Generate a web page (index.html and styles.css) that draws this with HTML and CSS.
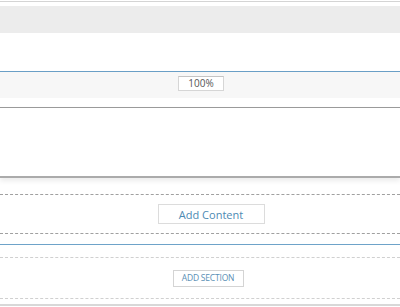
FILE: index.html
```html
<!DOCTYPE html>
<html>
<head>
    <title>Page Editor</title>
    <link rel="stylesheet" href="styles.css">
</head>
<body>

<div class="top-rule"></div>
<div class="header-band"></div>
<div class="header-space"></div>

<div class="editor">
    <div class="editor-toolbar">
        <span class="zoom-box">100%</span>
    </div>
    <div class="editor-gap"></div>
    <div class="editor-canvas"></div>
</div>

<div class="content-zone">
    <div class="drop-area">
        <button class="add-content">Add Content</button>
    </div>
</div>

<div class="section-zone">
    <div class="section-area">
        <button class="add-section">ADD SECTION</button>
    </div>
</div>

<div class="bottom-rule"></div>

</body>
</html>
```

FILE: styles.css
```css
body {
    font-family: "Open Sans", "Liberation Sans", sans-serif;
    background-color: #fff;
    margin: 0;
    padding: 0;
    color: #555;
    height: 307px;
    overflow: hidden;
}

.top-rule {
    margin-top: 1px;
    height: 1px;
    background-color: #d4d4d4;
}

.header-band {
    margin-top: 4px;
    height: 27px;
    background-color: #ececec;
}

.header-space {
    height: 38px;
}

.editor {
    border-top: 1px solid #6a9fc6;
}

.editor-toolbar {
    height: 26px;
    background-color: #f7f7f7;
    display: flex;
    justify-content: center;
    align-items: flex-start;
    padding-left: 2px;
}

.zoom-box {
    margin-top: 4px;
    width: 44px;
    height: 13px;
    border: 1px solid #d6d6d6;
    border-top-color: #c4c4c4;
    background-color: #fff;
    font-size: 10px;
    line-height: 13px;
    text-align: center;
    color: #555;
}

.editor-gap {
    height: 9px;
}

.editor-canvas {
    height: 68px;
    border-top: 1px solid #9a9a9a;
    border-bottom: 2px solid #ababab;
    box-shadow: 0 3px 5px rgba(0, 0, 0, 0.08);
}

.content-zone {
    padding-top: 16px;
    border-bottom: 1px solid #6ea3c9;
}

.drop-area {
    border-top: 1px dashed #a0a0a0;
    border-bottom: 1px dashed #a0a0a0;
    height: 38px;
    display: flex;
    justify-content: center;
    align-items: center;
    padding-left: 22px;
    margin-bottom: 10px;
}

button {
    font-family: "Open Sans", "Liberation Sans", sans-serif;
    background-color: #fff;
    color: #4d8ab3;
    cursor: pointer;
    padding: 0;
}

.add-content {
    width: 107px;
    height: 20px;
    border: 1px solid #dcdcdc;
    font-size: 11px;
    line-height: 17px;
}

.section-zone {
    padding-top: 12px;
}

.section-area {
    border-top: 1px dashed #d0d0d0;
    border-bottom: 1px dashed #d0d0d0;
    height: 40px;
    display: flex;
    justify-content: center;
    align-items: center;
    padding-left: 16px;
}

.add-section {
    width: 71px;
    height: 17px;
    border: 1px solid #d4d4d4;
    font-size: 8.5px;
    line-height: 14px;
    color: #5a8fb5;
    letter-spacing: -0.2px;
}

.bottom-rule {
    margin-top: 5px;
    height: 2px;
    background-color: #d8d8d8;
}
```
